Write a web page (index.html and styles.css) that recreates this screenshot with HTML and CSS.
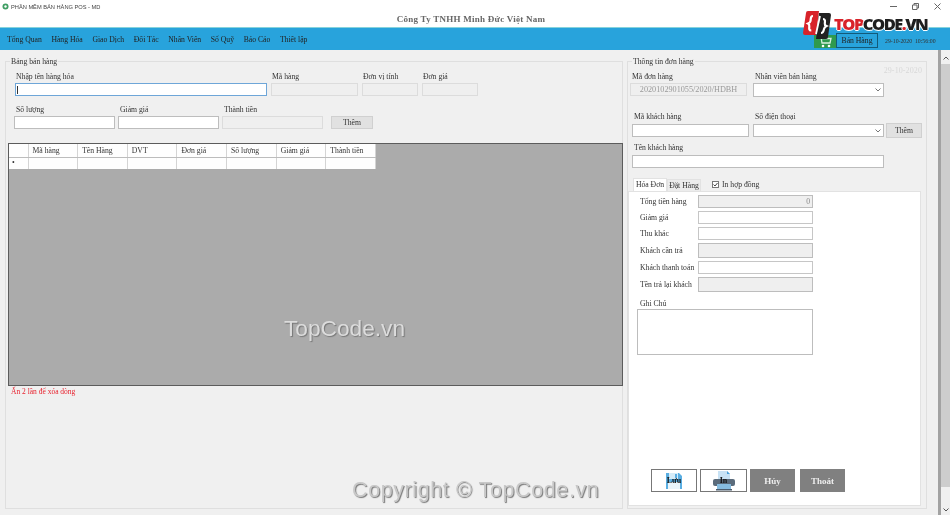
FILE: index.html
```html
<!DOCTYPE html>
<html lang="vi">
<head>
<meta charset="UTF-8">
<meta name="viewport" content="width=device-width, initial-scale=1.0">
<title>Phần mềm bán hàng POS - MD</title>
<link rel="stylesheet" href="styles.css">
</head>
<body>

<div class="window">
    <div class="titlebar">
        <svg class="app-icon" width="7" height="7" viewBox="0 0 7 7"><circle cx="3.5" cy="3.5" r="3" fill="#3f9e63"/><circle cx="3.5" cy="3.5" r="1.2" fill="#fff"/></svg>
        <span class="app-title">PHẦN MỀM BÁN HÀNG POS - MD</span>
        <div class="win-controls">
            <svg width="7" height="7" viewBox="0 0 7 7"><path d="M0 3.5h7" stroke="#666" fill="none"/></svg>
            <svg width="7" height="7" viewBox="0 0 7 7"><path d="M.5 2h4.500v4.500h-4.500zM2 2v-1.500h4.500v4.500h-1.500" stroke="#666" fill="none"/></svg>
            <svg width="7" height="7" viewBox="0 0 7 7"><path d="M.5 .5l6 6M6.500 .5l-6 6" stroke="#666" fill="none"/></svg>
        </div>
    </div>
    <div class="company">Công Ty TNHH Minh Đức Việt Nam</div>

    <nav class="menu">
        <a>Tổng Quan</a>
        <a>Hàng Hóa</a>
        <a>Giao Dịch</a>
        <a>Đối Tác</a>
        <a>Nhân Viên</a>
        <a>Sổ Quỹ</a>
        <a>Báo Cáo</a>
        <a>Thiết lập</a>
        <div class="menu-right">
            <div class="cart-btn">
                <svg width="14" height="12" viewBox="0 0 14 12"><path d="M1 1h2l1 6h8l1-4.500h-9" stroke="#d9efe0" stroke-width="1.300" fill="none"/><circle cx="5" cy="10" r="1.300" fill="#fff"/><circle cx="11" cy="10" r="1.300" fill="#fff"/></svg>
            </div>
            <div class="sell-btn">Bán Hàng</div>
            <div class="clock">29-10-2020&nbsp; 10:56:00</div>
        </div>
    </nav>

    <div class="logo">
        <svg width="28" height="28" viewBox="0 0 28 28">
            <path d="M5 0h11l-3 24h-11a2 2 0 0 1-2-2l3-20a2 2 0 0 1 2-2z" fill="#d8232a"/>
            <path d="M16 2h10a2 2 0 0 1 2 2l-3 22a2 2 0 0 1-2 2h-10z" fill="#222"/>
            <path d="M10 5c-3 0-2 3-2.500 5s-1.500 2-2.500 2.500c1 .5 1.500 1 1.300 3s-.5 4 2 4" stroke="#fff" stroke-width="2.200" fill="none"/>
            <path d="M17 5l-4 18" stroke="#fff" stroke-width="1.800"/>
            <path d="M20 8c2.500 0 2 2.500 1.800 4.500s.7 2 1.700 2.500c-1 .5-2 1-2.500 3s-.5 4-3 4" stroke="#fff" stroke-width="2.200" fill="none"/>
        </svg>
        <span class="logo-text"><span class="logo-red">TOP</span>CODE<span class="logo-red">.</span>VN</span>
    </div>

    <div class="content">
        <fieldset class="group group-sale">
            <legend>Bảng bán hàng</legend>
            <div class="row row-product">
                <div class="field w252"><label>Nhập tên hàng hóa</label><input type="text" class="active"></div>
                <div class="field w87"><label>Mã hàng</label><input type="text" disabled></div>
                <div class="field w56"><label>Đơn vị tính</label><input type="text" disabled></div>
                <div class="field w56"><label>Đơn giá</label><input type="text" disabled></div>
            </div>
            <div class="row row-qty">
                <div class="field w101"><label>Số lượng</label><input type="text"></div>
                <div class="field w101"><label>Giảm giá</label><input type="text"></div>
                <div class="field w101"><label>Thành tiền</label><input type="text" disabled></div>
                <button type="button" class="btn-add">Thêm</button>
            </div>

            <div class="grid-view">
                <table>
                    <tr>
                        <th class="row-head"></th>
                        <th>Mã hàng</th>
                        <th>Tên Hàng</th>
                        <th>DVT</th>
                        <th>Đơn giá</th>
                        <th>Số lượng</th>
                        <th>Giảm giá</th>
                        <th>Thành tiền</th>
                    </tr>
                    <tr>
                        <td class="row-head">•</td>
                        <td></td><td></td><td></td><td></td><td></td><td></td><td></td>
                    </tr>
                </table>
                <div class="mark mark-center">TopCode.vn</div>
            </div>
            <p class="hint">Ấn 2 lần để xóa dòng</p>
            <div class="mark mark-copy">Copyright © TopCode.vn</div>
        </fieldset>

        <fieldset class="group group-order">
            <legend>Thông tin đơn hàng</legend>
            <div class="order-date">29-10-2020</div>
            <div class="row row-code">
                <div class="field w117"><label>Mã đơn hàng</label><input type="text" class="code-input" value="2020102901055/2020/HDBH" disabled></div>
                <div class="field w131"><label>Nhân viên bán hàng</label>
                    <div class="combo"><svg width="6" height="4" viewBox="0 0 6 4"><path d="M.5 .5l2.500 2.500 2.500-2.500" stroke="#777" fill="none"/></svg></div>
                </div>
            </div>
            <div class="row row-customer">
                <div class="field w117"><label>Mã khách hàng</label><input type="text"></div>
                <div class="field w131"><label>Số điện thoại</label>
                    <div class="combo"><svg width="6" height="4" viewBox="0 0 6 4"><path d="M.5 .5l2.500 2.500 2.500-2.500" stroke="#777" fill="none"/></svg></div>
                </div>
                <button type="button" class="btn-add btn-add-big">Thêm</button>
            </div>
            <div class="row row-name">
                <div class="field w252"><label>Tên khách hàng</label><input type="text"></div>
            </div>

            <div class="tabs">
                <div class="tab tab-on">Hóa Đơn</div>
                <div class="tab">Đặt Hàng</div>
                <div class="check">
                    <svg width="7" height="7" viewBox="0 0 7 7"><rect x=".5" y=".5" width="6" height="6" fill="#fff" stroke="#777"/><path d="M1.500 3.500l1.500 1.500 2.500-3" stroke="#444" fill="none"/></svg>
                    In hợp đồng
                </div>
            </div>
            <div class="tab-panel">
                <div class="pay-grid">
                    <label>Tổng tiền hàng</label><input type="text" class="num" value="0" disabled>
                    <label>Giảm giá</label><input type="text">
                    <label>Thu khác</label><input type="text">
                    <label>Khách cần trả</label><input type="text" class="tall" disabled>
                    <label>Khách thanh toán</label><input type="text">
                    <label>Tền trả lại khách</label><input type="text" class="tall" disabled>
                </div>
                <label class="note-label">Ghi Chú</label>
                <textarea class="note"></textarea>
                <div class="actions">
                    <button type="button" class="btn-icon w46">
                        <svg width="18" height="18" viewBox="0 0 18 18"><path d="M1 1h13l3 3v13h-16z" fill="#5aaee2"/><rect x="4" y="1" width="9" height="6" fill="#d6ecf8"/><rect x="10" y="2" width="2" height="4" fill="#5aaee2"/><rect x="3" y="10" width="12" height="7" fill="#eaf5fb"/></svg>
                        <span>Lưu</span>
                    </button>
                    <button type="button" class="btn-icon w47">
                        <svg width="24" height="20" viewBox="0 0 24 20"><path d="M6 0h9l3 3v7h-12z" fill="#c8e2f5"/><path d="M15 0l3 3h-3z" fill="#4a9fd8"/><rect x="1" y="8" width="22" height="7" rx="2" fill="#5a6b7b"/><rect x="5" y="13" width="14" height="5" fill="#86bcdf"/><rect x="4" y="18" width="16" height="1.500" fill="#4b5d6e"/></svg>
                        <span>In</span>
                    </button>
                    <button type="button" class="btn-gray btn-cancel">Hủy</button>
                    <button type="button" class="btn-gray">Thoát</button>
                </div>
            </div>
        </fieldset>

        <div class="scrollbar">
            <div class="scroll-track">
                <svg width="6" height="4" viewBox="0 0 6 4"><path d="M.5 3.500l2.500-2.500 2.500 2.500" stroke="#555" fill="none"/></svg>
                <div class="scroll-thumb"></div>
                <svg width="6" height="4" viewBox="0 0 6 4"><path d="M.5 .5l2.500 2.500 2.500-2.500" stroke="#555" fill="none"/></svg>
            </div>
        </div>
    </div>
</div>

</body>
</html>
```

FILE: styles.css
```css
* {
    box-sizing: border-box;
}
html, body {
    margin: 0;
    padding: 0;
    height: 100%;
    overflow: hidden;
}
body {
    font-family: "Liberation Serif", serif;
    font-size: 7.7px;
    color: #333;
    background-color: #fff;
}
/* the source picture is a soft, scaled-down capture */
.window {
    position: relative;
    width: 950px;
    height: 515px;
    display: flex;
    flex-direction: column;
    filter: blur(0.3px);
}

/* title bar */
.titlebar {
    height: 12px;
    display: flex;
    align-items: center;
    padding-left: 2px;
}
.app-icon {
    margin-top: 1px;
}
.app-title {
    margin: 1px 0 0 2px;
    font-family: "Liberation Sans", sans-serif;
    font-size: 5.7px;
    color: #444;
}
.win-controls {
    margin-left: auto;
    padding-right: 9px;
    display: flex;
    gap: 15px;
}
.company {
    height: 15px;
    line-height: 14px;
    padding-right: 8px;
    text-align: center;
    font-weight: bold;
    font-size: 9px;
    letter-spacing: 0.25px;
    color: #666;
}

/* menu */
.menu {
    height: 23px;
    display: flex;
    align-items: center;
    gap: 9.6px;
    padding-left: 7px;
    background-color: #28a3dc;
    border-top: 1px solid #86d3dc;
    color: #222;
}
.menu-right {
    margin-left: auto;
    align-self: flex-end;
    display: flex;
    align-items: flex-end;
    padding-bottom: 2px;
}
.cart-btn {
    width: 22px;
    height: 13px;
    display: flex;
    justify-content: center;
    align-items: flex-end;
    background-color: #2f9a4f;
}
.sell-btn {
    width: 42px;
    height: 15px;
    line-height: 13px;
    text-align: center;
    border: 1px solid #125a7a;
}
.clock {
    width: 72px;
    padding-left: 7px;
    line-height: 13px;
    font-size: 5.8px;
    color: #333;
}

/* logo */
.logo {
    position: absolute;
    left: 803px;
    top: 11px;
    display: flex;
    align-items: center;
    gap: 3px;
}
.logo-text {
    font-family: "Open Sans", sans-serif;
    font-weight: 800;
    font-size: 16.5px;
    line-height: 20px;
    letter-spacing: -1.5px;
    margin-top: -2px;
    color: #1e1e1e;
    text-shadow: 1px 0 0 #fff, -1px 0 0 #fff, 0 1px 0 #fff, 0 -1px 0 #fff;
}
.logo-red {
    color: #d8232a;
}

/* main area */
.content {
    flex: 1;
    display: flex;
    align-items: stretch;
    background-color: #f0f0f0;
    padding: 6px 0 0 5px;
}
.group {
    position: relative;
    margin: 0;
    padding: 0;
    height: 453px;
    border: 1px solid #dfdfdf;
    min-width: 0;
}
.group legend {
    margin-left: 4px;
    padding: 0 1px;
    height: 10px;
    line-height: 12px;
}
.group-sale {
    width: 618px;
}
.group-order {
    width: 300px;
    margin-left: 4px;
}
.row {
    display: flex;
    align-items: flex-end;
}
.field {
    display: flex;
    flex-direction: column;
}
.field label {
    height: 10px;
    line-height: 10px;
    margin: 0 0 1px 1px;
    white-space: nowrap;
}
input {
    display: block;
    width: 100%;
    height: 13px;
    padding: 0 2px;
    font-family: inherit;
    font-size: 7.7px;
    color: #888;
    background-color: #fff;
    border: 1px solid #bdbdbd;
    border-radius: 0;
    outline: none;
}
input:disabled {
    background-color: #efefef;
    border-color: #dcdcdc;
}
input.active {
    border-color: #6ea6d8;
    background: linear-gradient(#333, #333) 1px 2px / 1px 8px no-repeat #fff;
}
.w46 { width: 46px; }
.w47 { width: 47px; }
.w56 { width: 56px; }
.w87 { width: 87px; }
.w101 { width: 101px; }
.w117 { width: 117px; }
.w131 { width: 131px; }
.w252 { width: 252px; }

.btn-add {
    width: 42px;
    height: 13px;
    padding: 0;
    margin-left: 5px;
    font-family: inherit;
    font-size: 7.7px;
    color: #333;
    background-color: #e1e1e1;
    border: 1px solid #d0d0d0;
    border-radius: 0;
}

/* left panel */
.row-product {
    padding: 6px 0 0 9px;
    gap: 4px;
}
.row-qty {
    margin-top: 9px;
    padding-left: 8px;
    gap: 3px;
}
.row-qty .field label {
    margin-left: 2px;
}
.grid-view {
    position: relative;
    height: 243px;
    margin: 14px -1px 0 2px;
    background-color: #ababab;
    border: 1px solid #5c5c5c;
}
.grid-view table {
    width: 367px;
    table-layout: fixed;
    border-collapse: collapse;
    will-change: opacity;
}
.grid-view th,
.grid-view td {
    background-color: rgba(255, 255, 255, 0.99);
}
.grid-view th {
    height: 13px;
    padding: 0 0 0 4px;
    font-weight: normal;
    text-align: left;
    border-right: 1px solid #d4d4d4;
    border-bottom: 1px solid #bcbcbc;
}
.grid-view td {
    height: 12px;
    padding: 0 0 0 3px;
    line-height: 8px;
    border-right: 1px solid #d4d4d4;
}
.grid-view .row-head {
    width: 19px;
}
.mark {
    position: absolute;
    font-family: "Liberation Sans", sans-serif;
    color: #dcdcdc;
    text-shadow: 1px 1px 1px #777;
    white-space: nowrap;
}
.mark-center {
    left: 275px;
    top: 171px;
    font-size: 22.7px;
}
.mark-copy {
    left: 346px;
    top: 412px;
    font-size: 21.5px;
    letter-spacing: 0.6px;
    color: #c8c8c8;
}
.hint {
    margin: 0;
    padding: 1px 0 0 5px;
    font-size: 7.5px;
    line-height: 10px;
    color: #e8222e;
}

/* right panel */
.order-date {
    position: absolute;
    top: 0;
    right: 4px;
    color: #d8d8d8;
    font-size: 8px;
    letter-spacing: 0.1px;
}
.row-code {
    padding: 6px 0 0 2px;
    gap: 6px;
    align-items: flex-start;
}
.row-code label {
    margin-left: 2px;
}
.code-input {
    text-align: center;
    color: #999;
    font-size: 8.2px;
}
.combo {
    height: 14px;
    background-color: #fff;
    border: 1px solid #bdbdbd;
    display: flex;
    align-items: center;
    justify-content: flex-end;
    padding-right: 2px;
}
.row-customer {
    margin-top: 15px;
    padding-left: 4px;
    gap: 4px;
}
.row-customer .combo {
    height: 13px;
}
.row-customer .field label {
    margin: 0 0 2px 2px;
}
.btn-add-big {
    width: 36px;
    height: 15px;
    margin: 0 0 -1px -2px;
}
.row-name {
    margin-top: 6px;
    padding-left: 4px;
}
.row-name .field label {
    margin: 0 0 2px 2px;
}
.tabs {
    margin: 10px 0 0 5px;
    height: 13px;
    display: flex;
    align-items: flex-end;
}
.tab {
    width: 34px;
    height: 12px;
    line-height: 12px;
    text-align: center;
    background-color: rgba(236, 236, 236, 0.99);
    border: 1px solid #e2e2e2;
    border-bottom: none;
}
.tab-on {
    height: 13px;
    background-color: rgba(255, 255, 255, 0.99);
}
.check {
    margin-left: 11px;
    height: 13px;
    display: flex;
    align-items: center;
    gap: 3px;
}
.tab-panel {
    width: 293px;
    height: 315px;
    padding: 3px 0 13px 8px;
    display: flex;
    flex-direction: column;
    background-color: #fff;
    border: 1px solid #e2e2e2;
}
.pay-grid {
    margin-left: 3px;
    display: grid;
    grid-template-columns: 58px 115px;
    row-gap: 3px;
    align-items: center;
}
.pay-grid label {
    line-height: 10px;
    white-space: nowrap;
}
.pay-grid input {
    border-color: #c6c6c6;
}
.pay-grid input:disabled {
    border-color: #bdbdbd;
}
.pay-grid .tall {
    height: 15px;
}
.pay-grid .num {
    text-align: right;
}
.note-label {
    display: block;
    margin-top: 7px;
    height: 10px;
    line-height: 10px;
    margin-left: 3px;
}
.note {
    display: block;
    width: 176px;
    height: 46px;
    margin: 0;
    resize: none;
    border: 1px solid #bdbdbd;
    border-radius: 0;
    outline: none;
}
.actions {
    margin: auto 0 0 14px;
    display: flex;
    gap: 3px;
}
.btn-icon {
    display: grid;
    place-items: center;
    height: 23px;
    padding: 0;
    background-color: #fff;
    border: 1px solid #777;
    border-radius: 0;
    font-family: inherit;
    font-weight: bold;
    font-size: 8px;
    color: #111;
}
.btn-icon svg,
.btn-icon span {
    grid-area: 1 / 1;
}
.btn-gray {
    width: 45px;
    height: 23px;
    padding: 0;
    font-family: inherit;
    font-weight: bold;
    font-size: 9px;
    color: #eee;
    background-color: #808080;
    border: none;
    border-radius: 0;
}
.btn-cancel {
    margin-right: 2px;
}

/* scrollbar */
.scrollbar {
    width: 12px;
    margin: -6px 0 0 11px;
    border-left: 3px solid #a2a2a2;
    background-color: #f0f0f0;
}
.scroll-track {
    height: 100%;
    display: flex;
    flex-direction: column;
    align-items: center;
    padding: 6px 0 3px;
    gap: 4px;
}
.scroll-thumb {
    flex: 1;
    width: 100%;
    margin-bottom: 17px;
    background-color: #cdcdcd;
}
```
